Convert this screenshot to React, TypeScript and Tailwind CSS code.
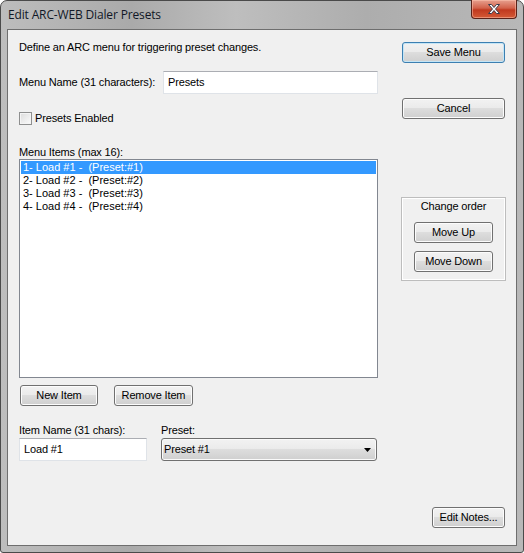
import React from "react"

const ui = "font-['Liberation_Sans',Arial,sans-serif] text-[11px] leading-[13px] tracking-[-0.15px] text-black"

function Button({
  label,
  width,
  primary = false,
}: {
  label: string
  width: string
  primary?: boolean
}) {
  return (
    <button
      type="button"
      className={`${width} h-[21px] rounded-[3px] border ${
        primary
          ? "border-[#3c7fb1] shadow-[inset_0_0_0_1px_#c4e5f6]"
          : "border-[#707070] shadow-[inset_0_0_0_1px_#fcfcfc]"
      } bg-[linear-gradient(#f2f2f2_0%,#ebebeb_45%,#dddddd_50%,#cfcfcf_100%)] ${ui} flex items-center justify-center`}
    >
      {label}
    </button>
  )
}

function CloseButton() {
  return (
    <div className="flex h-[19px] w-[46px] items-center justify-center rounded-b-[4px] border border-t-0 border-[#5a2219] bg-[linear-gradient(#e7a08f_0%,#d2614a_45%,#c0391f_55%,#d45a36_100%)] shadow-[inset_0_0_0_1px_rgba(255,200,180,0.5)]">
      <svg width="14" height="12" viewBox="0 0 14 12">
        <path
          d="M1.5 1.5h3l2.5 3 2.5-3h3l-4 4.5 4 4.5h-3l-2.5-3-2.5 3h-3l4-4.5z"
          fill="#ffffff"
          stroke="#3b3b4a"
          strokeWidth="1"
          strokeLinejoin="round"
        />
      </svg>
    </div>
  )
}

const items = [
  "1- Load #1 -  (Preset:#1)",
  "2- Load #2 -  (Preset:#2)",
  "3- Load #3 -  (Preset:#3)",
  "4- Load #4 -  (Preset:#4)",
]

export default function App() {
  return (
    <div className="h-[553px] w-[524px] overflow-hidden bg-white">
      <div className="flex h-full flex-col rounded-t-[7px] rounded-b-[3px] border border-[#4a4a4a] bg-[linear-gradient(90deg,#bdbdbd_0%,#aaaaaa_25%,#bebebe_45%,#adadad_70%,#b8b8b8_100%)] px-[6px] pb-[6px]">
        {/* title bar */}
        <div className="-mt-[1px] flex h-[29px] items-start justify-between">
          <span className="mt-[7px] pl-[1px] font-['Open_Sans',sans-serif] text-[12px] leading-[16px] tracking-[-0.15px] text-[#111827]">
            Edit ARC-WEB Dialer Presets
          </span>
          <CloseButton />
        </div>

        {/* client area */}
        <div className="flex flex-1 border border-[#6e6e6e] bg-[#f0f0f0] px-[11px]">
          <div className="flex w-[359px] flex-col pt-[11px]">
            <p className={ui}>Define an ARC menu for triggering preset changes.</p>

            <div className="mt-[17px] flex h-[23px] items-center justify-between">
              <span className={ui}>Menu Name (31 characters):</span>
              <div className="flex h-[23px] w-[215px] items-center border border-[#dfe3e8] border-t-[#abadb3] bg-white px-[4px]">
                <span className={ui}>Presets</span>
              </div>
            </div>

            <label className="mt-[18px] flex h-[13px] items-center gap-[3px]">
              <span className="h-[13px] w-[13px] border border-[#8e8f8f] bg-[linear-gradient(135deg,#dcdcdc,#fbfbfb)] shadow-[inset_0_0_0_1px_#f4f4f4]" />
              <span className={ui}>Presets Enabled</span>
            </label>

            <span className={`mt-[21px] ${ui}`}>Menu Items (max 16):</span>

            <div className="h-[219px] border border-[#828790] bg-white p-[1px]">
              {items.map((item, i) => (
                <div
                  key={item}
                  className={`h-[13px] whitespace-pre pl-[2px] ${ui} tracking-[0px] ${i === 0 ? "bg-[#3399ff] text-white" : ""}`}
                >
                  {item}
                </div>
              ))}
            </div>

            <div className="mt-[7px] flex gap-[16px] pl-[1px]">
              <Button label="New Item" width="w-[78px]" />
              <Button label="Remove Item" width="w-[79px]" />
            </div>

            <div className="mt-[18px] flex">
              <div className="flex w-[142px] flex-col">
                <span className={ui}>Item Name (31 chars):</span>
                <div className="mt-[1px] flex h-[23px] w-[128px] items-center border border-[#dfe3e8] border-t-[#abadb3] bg-white px-[4px]">
                  <span className={ui}>Load #1</span>
                </div>
              </div>
              <div className="flex flex-col">
                <span className={ui}>Preset:</span>
                <div className="mt-[1px] flex h-[23px] w-[216px] items-center justify-between rounded-[3px] border border-[#707070] bg-[linear-gradient(#f2f2f2_0%,#ebebeb_45%,#dddddd_50%,#cfcfcf_100%)] pl-[2px] pr-[5px] shadow-[inset_0_0_0_1px_#fafafa]">
                  <span className={ui}>Preset #1</span>
                  <svg width="7" height="4" viewBox="0 0 7 4">
                    <path d="M0 0h7L3.5 4z" fill="#000" />
                  </svg>
                </div>
              </div>
            </div>
          </div>

          <div className="ml-[23px] flex w-[104px] flex-col pt-[12px] pb-[17px]">
            <div className="pl-[1px]">
              <Button label="Save Menu" width="w-[103px]" primary />
            </div>
            <div className="mt-[35px] pl-[1px]">
              <Button label="Cancel" width="w-[103px]" />
            </div>

            <div className="mt-[78px] flex h-[84px] w-[105px] flex-col items-center border border-[#bdbdbd] pt-[2px] shadow-[inset_0_0_0_1px_#ffffff]">
              <span className={ui}>Change order</span>
              <div className="mt-[9px]">
                <Button label="Move Up" width="w-[79px]" />
              </div>
              <div className="mt-[8px]">
                <Button label="Move Down" width="w-[79px]" />
              </div>
            </div>

            <div className="mt-auto self-end">
              <Button label="Edit Notes..." width="w-[73px]" />
            </div>
          </div>
        </div>
      </div>
    </div>
  )
}
